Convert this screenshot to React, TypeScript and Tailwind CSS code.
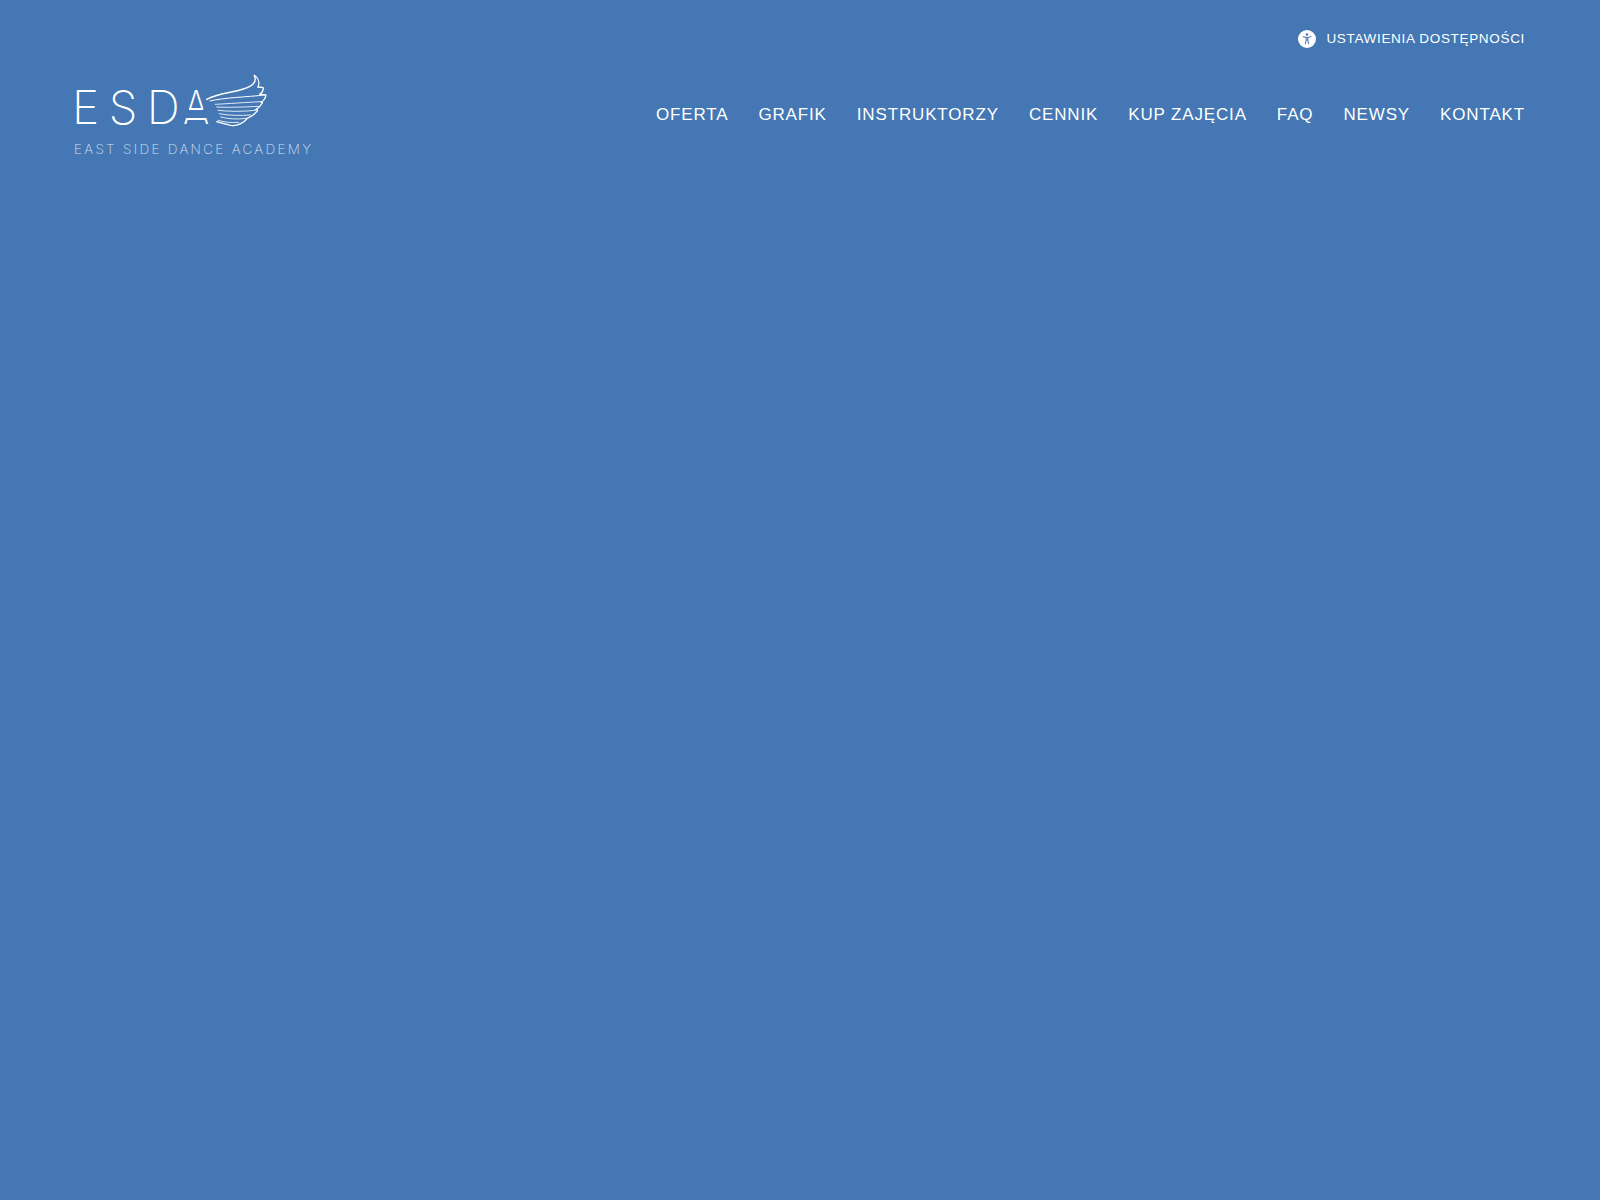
import React from 'react';

const navItems = ['OFERTA', 'GRAFIK', 'INSTRUKTORZY', 'CENNIK', 'KUP ZAJĘCIA', 'FAQ', 'NEWSY', 'KONTAKT'];

const Wing = () => (
  <svg width="90" height="70" viewBox="0 0 270 210" fill="none" stroke="white" strokeLinecap="round" className="-ml-[21px] mb-[-7px] shrink-0">
    <path strokeWidth="4" d="M50 103C85 84 125 84 160 72C185 64 204 52 192 30C204 38 210 52 204 66C214 66 221 68 220 70C219 78 216 84 208 88C218 88 228 88 228 90C226 102 220 108 212 112C216 112 218 112 217 114C210 126 204 130 198 134C204 134 204 136 200 140C190 152 180 156 172 160C160 176 140 184 122 181C108 178 94 174 80 170" />
    <path strokeWidth="3" d="M60 108C100 98 170 96 225 90" />
    <path strokeWidth="2.5" d="M76 118C115 116 170 112 214 110" />
    <path strokeWidth="2.5" d="M80 126C115 128 165 126 205 124" />
    <path strokeWidth="2.5" d="M84 136C115 140 160 140 196 136" />
    <path strokeWidth="2.5" d="M88 146C115 152 150 152 182 150" />
    <path strokeWidth="2.5" d="M92 156C115 162 140 164 170 160" />
    <path strokeWidth="2.5" d="M84 166C105 172 125 174 146 172" />
  </svg>
);

const Logo = () => (
  <a href="#" className="flex flex-col items-start">
    <div className="flex items-end h-[54px] -ml-[2px] font-['Inter',sans-serif] font-extralight text-[46px] leading-[46px] text-white">
      <span className="tracking-[9.5px] mb-[-2px]">ES</span>
      <span className="mb-[-2px]">D</span>
      <span className="relative ml-[1.5px] mb-[-2px] scale-x-[0.87]">
        A
        <span className="absolute left-0 right-0 top-[25px] h-[9px] bg-[#4477b3]" />
        <span className="absolute left-1/2 -translate-x-1/2 top-[24px] h-[1.5px] w-[16px] bg-white" />
        <span className="absolute left-1/2 -translate-x-1/2 top-[34px] h-[1.5px] w-[22px] bg-white" />
      </span>
      <Wing />
    </div>
    <span className="mt-[13px] font-['Inter',sans-serif] font-extralight text-[13.5px] leading-[16px] tracking-[2.3px] text-[#d3e0f0] whitespace-nowrap">EAST SIDE DANCE ACADEMY</span>
  </a>
);

const AccessIcon = () => (
  <svg width="18" height="18" viewBox="0 0 18 18" className="shrink-0">
    <circle cx="9" cy="9" r="9" fill="white" />
    <circle cx="9" cy="4.5" r="1.2" fill="#4477b3" />
    <path d="M5.2 6.7L8 7.4H10L12.8 6.7M8.2 7.4V10.2L7.3 13.8M9.8 7.4V10.2L10.7 13.8M8.2 10H9.8" stroke="#4477b3" strokeWidth="1" fill="none" strokeLinecap="round" strokeLinejoin="round" />
  </svg>
);

export default function App() {
  return (
    <div className="min-h-[1200px] bg-[#4477b3] font-['Liberation_Sans',Arial,sans-serif] text-white">
      <header className="pl-[74px] pr-[75px] pt-[30px]">
        <div className="flex justify-end">
          <a href="#" className="flex items-center gap-[10px] text-[13.5px] leading-[18px] tracking-[0.675px]">
            <AccessIcon />
            USTAWIENIA DOSTĘPNOŚCI
          </a>
        </div>
        <div className="mt-[26px] flex items-start justify-between">
          <Logo />
          <nav className="mt-[30px] flex gap-[30px] text-[17px] leading-[22px] tracking-[0.85px]">
            {navItems.map((item) => (
              <a key={item} href="#" className="whitespace-nowrap">{item}</a>
            ))}
          </nav>
        </div>
      </header>
    </div>
  );
}
